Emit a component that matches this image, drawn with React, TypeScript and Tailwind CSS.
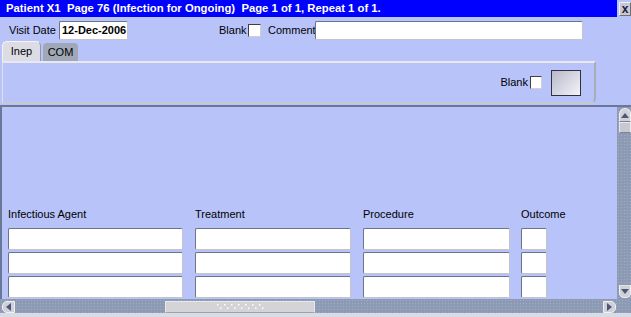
import React from "react";

const inputCls =
  "bg-white border border-t-[#6c7488] border-l-[#6c7488] border-b-[#c4c4c8] border-r-[#c4c4c8] rounded-[2px] shrink-0";

function Field({ w }: { w: string }) {
  return <div className={`${w} h-[22px] ${inputCls}`} />;
}

function Column({ label, w }: { label: string; w: string }) {
  return (
    <div className="flex flex-col shrink-0">
      <div className="h-[14px] leading-[14px] whitespace-nowrap">{label}</div>
      <div className="mt-[7px] flex flex-col gap-[2px]">
        <Field w={w} />
        <Field w={w} />
        <Field w={w} />
      </div>
    </div>
  );
}

export default function App() {
  return (
    <div className="w-[631px] h-[317px] bg-[#b8c3fa] flex flex-col overflow-hidden font-['Liberation_Sans',Arial,sans-serif] text-[11px] text-black">
      {/* title bar */}
      <div className="h-[17px] flex items-stretch shrink-0">
        <div className="flex-1 bg-[#0000ff] text-white pl-[6px] leading-[17px] whitespace-pre font-bold text-[11.3px]">
          Patient X1  Page 76 (Infection for Ongoing)  Page 1 of 1, Repeat 1 of 1.
        </div>
        <div className="w-[14px] shrink-0 flex items-end justify-end pb-[1px]">
          <div className="w-[12px] h-[14px] bg-[#c8c8d4] border border-t-[#f0f0f0] border-l-[#f0f0f0] border-b-[#707070] border-r-[#707070] flex items-center justify-center font-bold text-[12px] leading-none text-[#202040]">
            x
          </div>
        </div>
      </div>

      {/* visit date row */}
      <div className="h-[24px] flex items-center shrink-0 pt-[3px]">
        <div className="w-[59px] shrink-0 pl-[9px] whitespace-nowrap">Visit Date</div>
        <div className={`w-[69px] h-[19px] ${inputCls} pl-[2px] leading-[17px] font-bold whitespace-nowrap overflow-hidden`}>12-Dec-2006</div>
        <div className="w-[91px] shrink-0" />
        <div className="w-[29px] shrink-0 whitespace-nowrap">Blank</div>
        <div className="w-[13px] h-[13px] shrink-0 bg-white border border-t-[#404040] border-l-[#404040] border-b-[#d0d0d0] border-r-[#d0d0d0]" />
        <div className="w-[7px] shrink-0" />
        <div className="w-[47px] shrink-0 whitespace-nowrap">Comment</div>
        <div className={`w-[268px] h-[19px] ${inputCls}`} />
      </div>

      {/* tabs */}
      <div className="h-[20px] flex items-end pl-[2px] shrink-0">
        <div className="w-[39px] h-[20px] shrink-0 bg-[#dcdce4] rounded-t-[5px] border border-b-0 border-[#f4f4f4] border-r-[#9098a8] flex items-center justify-center leading-none pb-[1px]">
          Inep
        </div>
        <div className="ml-[2px] w-[35px] h-[18px] shrink-0 bg-[#a0a8b8] rounded-t-[4px] flex items-center justify-center leading-none">
          COM
        </div>
      </div>

      {/* panel */}
      <div className="ml-[2px] w-[594px] h-[43px] shrink-0 border-t-[2px] border-t-[#e8e8ee] border-l border-l-[#e0e0e8] border-r-[2px] border-r-[#a8acb8] border-b-[2px] border-b-[#c8c8d0] rounded-br-[6px] flex items-center justify-end pr-[13px]">
        <div className="whitespace-nowrap">Blank</div>
        <div className="ml-[2px] w-[12px] h-[13px] shrink-0 bg-white border border-t-[#404040] border-l-[#404040] border-b-[#d0d0d0] border-r-[#d0d0d0]" />
        <div className="ml-[9px] w-[30px] h-[26px] shrink-0 border border-[#303040] bg-[linear-gradient(135deg,#b8b8cc,#f4f4f8)]" />
      </div>

      <div className="h-[1px] shrink-0" />

      {/* content */}
      <div className="flex-1 flex border-t-[2px] border-t-[#6a7898] min-h-0">
        <div className="flex-1 border-l-[2px] border-l-[#6a7898] pl-[6px] pt-[100px] flex gap-[12px] overflow-hidden">
          <Column label="Infectious Agent" w="w-[175px]" />
          <Column label="Treatment" w="w-[156px]" />
          <Column label="Procedure" w="w-[147px]" />
          <div className="-ml-[1px] shrink-0">
            <Column label="Outcome" w="w-[26px]" />
          </div>
        </div>
        {/* vertical scrollbar */}
        <div className="w-[14px] shrink-0 bg-[#8c9ab4] bg-[radial-gradient(#a2acc6_1px,transparent_1px)] bg-[length:3px_3px] flex flex-col items-end pt-[1px]">
          <div className="w-[12px] h-[14px] bg-[#d0d0d8] rounded-t-[6px] border border-[#f0f0f0] border-b-[#808090] flex items-center justify-center">
            <svg width="8" height="5" viewBox="0 0 8 5"><path d="M0 5 L4 0 L8 5 Z" fill="#4a5878" /></svg>
          </div>
          <div className="w-[12px] h-[11px] bg-[#c8c8d0] border border-[#e8e8f0] border-b-[#808090]" />
          <div className="flex-1" />
          <div className="w-[12px] h-[13px] bg-[#d0d0d8] rounded-b-[5px] border border-[#f0f0f0] border-t-[#e0e0e8] flex items-center justify-center mb-[1px]">
            <svg width="8" height="5" viewBox="0 0 8 5"><path d="M0 0 L4 5 L8 0 Z" fill="#4a5878" /></svg>
          </div>
        </div>
      </div>

      {/* horizontal scrollbar */}
      <div className="h-[14px] shrink-0 bg-[#8c9ab4] bg-[radial-gradient(#a2acc6_1px,transparent_1px)] bg-[length:3px_3px] flex items-end">
        <div className="ml-[2px] w-[13px] h-[12px] shrink-0 bg-[#d0d0d8] rounded-l-[5px] border border-[#f0f0f0] flex items-center justify-center">
          <svg width="5" height="8" viewBox="0 0 5 8"><path d="M5 0 L0 4 L5 8 Z" fill="#4a5878" /></svg>
        </div>
        <div className="w-[150px] shrink-0" />
        <div className="w-[150px] h-[12px] shrink-0 bg-[#d4d4d8] border border-[#e8e8ec] border-b-[#a0a0a8] flex items-center justify-center">
          <svg width="50" height="6" viewBox="0 0 50 6">
            {[0, 1, 2, 3, 4, 5, 6].map((i) => (
              <rect key={"a" + i} x={2 + i * 7} y={0} width={1.5} height={1.5} fill="#ffffff" />
            ))}
            {[0, 1, 2, 3, 4, 5, 6].map((i) => (
              <rect key={"b" + i} x={5 + i * 7} y={3.5} width={1.5} height={1.5} fill="#ffffff" />
            ))}
          </svg>
        </div>
        <div className="w-[288px] shrink-0" />
        <div className="w-[13px] h-[12px] shrink-0 bg-[#d0d0d8] rounded-r-[5px] border border-[#f0f0f0] flex items-center justify-center">
          <svg width="5" height="8" viewBox="0 0 5 8"><path d="M0 0 L5 4 L0 8 Z" fill="#4a5878" /></svg>
        </div>
      </div>
      <div className="h-[4px] shrink-0 bg-[#d8dce4]" />
    </div>
  );
}
